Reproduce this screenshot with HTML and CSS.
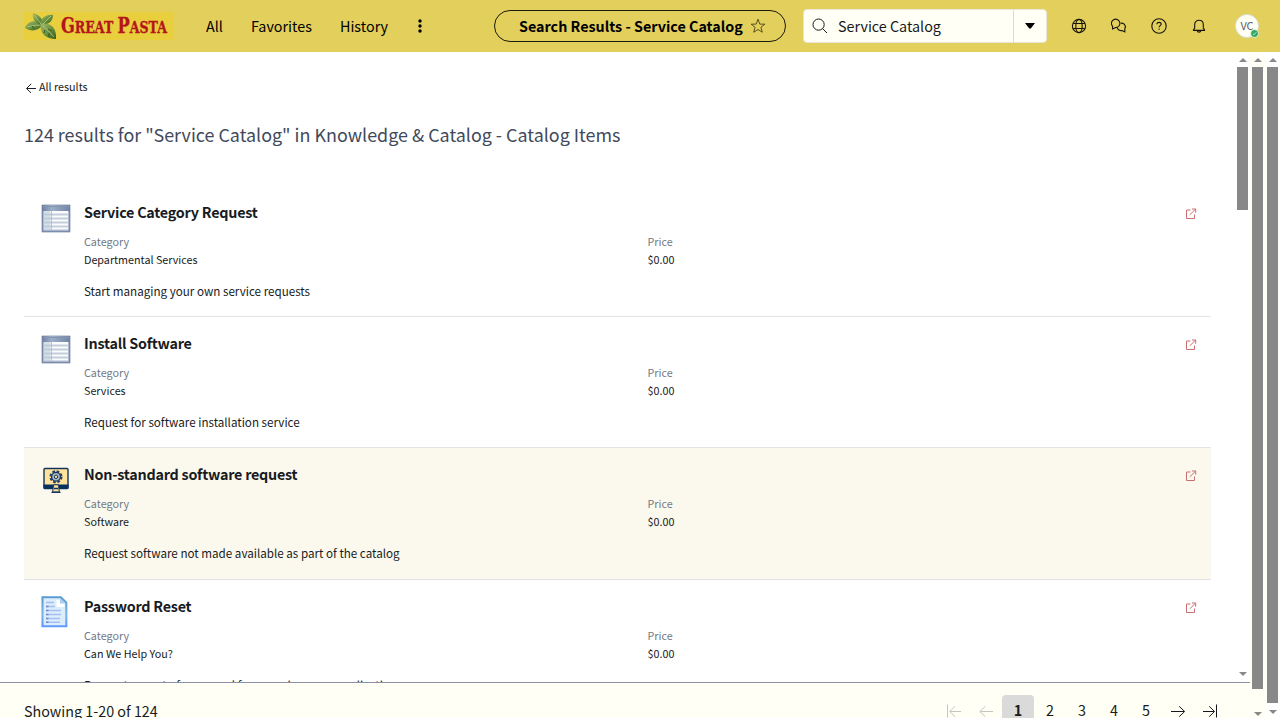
FILE: index.html
```html
<!DOCTYPE html>
<html lang="en">
<head>
<meta charset="utf-8">
<title>Search Results - Service Catalog</title>
<link rel="stylesheet" href="styles.css">
</head>
<body>
<svg class="defs" width="0" height="0">
  <defs>
    <linearGradient id="tableHead" x1="0" y1="0" x2="1" y2="0"><stop offset="0" stop-color="#6d7fa0"/><stop offset=".35" stop-color="#9dafc6"/><stop offset="1" stop-color="#7184a4"/></linearGradient>
    <linearGradient id="leaf" x1="0" y1="0" x2="1" y2="1"><stop offset="0" stop-color="#a3bc6c"/><stop offset=".55" stop-color="#668e3b"/><stop offset="1" stop-color="#34581d"/></linearGradient>
    <linearGradient id="page" x1="0" y1="0" x2="0" y2="1"><stop offset="0" stop-color="#5a9bd0"/><stop offset=".6" stop-color="#7db4e4"/><stop offset="1" stop-color="#5f98ff"/></linearGradient>
    <symbol id="table" viewBox="0 0 32 32">
      <rect x="1.5" y="2.5" width="29" height="28" rx="1" fill="#c9d1dd"/>
      <rect x="2.7" y="3.7" width="26.6" height="25.6" fill="#fafbfd" stroke="#7a89a9" stroke-width="1.8"/>
      <rect x="2" y="3" width="28" height="6" fill="url(#tableHead)"/>
      <path d="M3 4.5h26" stroke="#8794b1"/>
      <path d="M3.5 12.5h25M3.5 16.5h25M3.5 20.5h25M3.5 24.5h25" stroke="#c3cedd" stroke-width="1.8"/>
      <path d="M3.5 28.3h25" stroke="#a9b6cc" stroke-width="1.5"/>
      <path d="M4 9h6v19H4z" fill="#b7cad9" opacity=".55"/><path d="M11.3 9v19" stroke="#a7bccb"/>
    </symbol>
    <symbol id="external" viewBox="0 0 12 12"><path d="M5.5 2H1.5v8.5h8V6.5M4.8 6.8 10.5 1.2M7 1h3.7v3.7" fill="none" stroke="#c96f70" stroke-width="1"/></symbol>
  </defs>
</svg>
<div class="app">
  <header class="topbar">
    <svg class="logo" width="150" height="28" viewBox="0 0 150 28" role="img">
      <rect width="150" height="28" fill="#e9cf3d"/>
      <path d="M1 16C4 8 12 7 19 13 14 19 7 20 1 16z" fill="url(#leaf)"/>
      <path d="M9 1C16 3 20 8 18 14 11 11 8 7 9 1z" fill="url(#leaf)"/>
      <path d="M29 3C22 2 16 7 16 12 23 14 29 10 29 3z" fill="url(#leaf)"/>
      <path d="M17 12C26 10 33 16 32 27 22 27 15 21 17 12z" fill="url(#leaf)"/>
      <path d="M3 15q7-2 14-2M10 3l7 9M27 4l-8 8M19 14q5 4 11 11" fill="none" stroke="#bed18c" stroke-width=".7"/>
      <path d="M21 18l-1 3M25 21v4M24 17l4 2M8 14l2 3" stroke="#31541e" stroke-width=".9"/>
      <text class="wordmark" x="37" y="21.3" textLength="106" lengthAdjust="spacingAndGlyphs"><tspan class="cap">G</tspan>REAT <tspan class="cap">P</tspan>ASTA</text>
    </svg>
    <nav class="menu"><span class="m-all">All</span><span class="m-fav">Favorites</span><span class="m-his">History</span></nav>
    <svg class="kebab" width="4" height="14"><circle cx="2" cy="2" r="1.7"/><circle cx="2" cy="7" r="1.7"/><circle cx="2" cy="12" r="1.7"/></svg>
    <div class="pill"><span class="pill-text">Search Results - Service Catalog</span>
      <svg width="16" height="16" viewBox="0 0 16 16"><path d="M8 1.2l1.8 4.9 5 .1-3.9 3.1 1.4 4.9L8 11.5l-4.3 2.7 1.4-4.9-3.9-3.1 5-.1z" fill="none" stroke="#38340f" stroke-width=".8"/></svg>
    </div>
    <div class="search">
      <svg class="lens" width="16" height="16" viewBox="0 0 16 16"><circle cx="6.6" cy="6.6" r="5.6" /><path d="M10.6 10.6 15 15"/></svg>
      <span class="search-text">Service Catalog</span>
      <span class="drop"><svg width="10" height="6"><path d="M0 0h10L5.8 5.6H4.2z"/></svg></span>
    </div>
    <div class="tools">
      <svg width="16" height="16" viewBox="0 0 16 16"><circle cx="8" cy="8" r="6.6"/><ellipse cx="8" cy="8" rx="3.2" ry="6.6"/><path d="M2.2 5.5h11.6M2.2 10.5h11.6"/></svg>
      <svg width="16" height="16" viewBox="0 0 16 16"><path d="M1.6 11V8.3A4.2 4.2 0 1 1 4.6 9.6L1.6 11z"/><path d="M9.6 5.3a3.7 3.7 0 0 1 4.2 5.5V13.9L11 12.5A4 4 0 0 1 6.2 9.4"/></svg>
      <svg width="16" height="16" viewBox="0 0 16 16"><circle cx="8" cy="8" r="7.2"/><path d="M5.9 6.3C6 3.7 10.2 3.8 10.2 6.1 10.2 7.6 8.1 7.6 8.1 9.3M8.1 10.6v1.2"/></svg>
      <svg width="16" height="16" viewBox="0 0 16 16"><path d="M2.5 12.4V11.6L3.7 10V6.5C3.7 .8 12.3 .8 12.3 6.5V10l1.2 1.6v.8zM6.2 12.6c.3 2 3.3 2 3.6 0"/></svg>
    </div>
    <div class="avatar">VC<svg class="presence" width="9" height="9" viewBox="0 0 9 9"><circle cx="4.5" cy="4.5" r="4" fill="#35a566" stroke="#fffff4" stroke-width=".8"/><path d="M2.8 4.7 4 5.8l2.2-2.5" fill="none" stroke="#d8f5df" stroke-width=".8"/></svg></div>
  </header>

  <div class="body">
    <div class="pane">
      <div class="scroll">
        <main class="results">
          <a class="back"><svg width="12" height="12" viewBox="0 0 12 12"><path d="M11 7.5H1.8M6.2 2.8 1.5 7.5l4.5 4.4" fill="none" stroke="#1d2129"/></svg><span>All results</span></a>
          <h1><span>124 results for "Service Catalog" in Knowledge &amp; Catalog - Catalog Items</span></h1>
          <article class="row">
            <svg class="thumb" width="32" height="32"><use href="#table"/></svg>
            <div class="info"><h2><span>Service Category Request</span></h2>
              <dl><div><dt>Category</dt><dd>Departmental Services</dd></div><div><dt>Price</dt><dd>$0.00</dd></div></dl>
              <p><span>Start managing your own service requests</span></p></div>
            <svg class="ext" width="12" height="12"><use href="#external"/></svg>
          </article>
          <article class="row">
            <svg class="thumb" width="32" height="32"><use href="#table"/></svg>
            <div class="info"><h2><span>Install Software</span></h2>
              <dl><div><dt>Category</dt><dd>Services</dd></div><div><dt>Price</dt><dd>$0.00</dd></div></dl>
              <p><span>Request for software installation service</span></p></div>
            <svg class="ext" width="12" height="12"><use href="#external"/></svg>
          </article>
          <article class="row hover">
            <svg class="thumb" width="32" height="32" viewBox="0 0 32 32">
              <rect x="4" y="3.5" width="24" height="20" rx="1" fill="#ffe29b" stroke="#12345d" stroke-width="1.4"/>
              <path d="M3.5 19.5h25v4h-25z" fill="#06305f"/><path d="M13.5 19.8h5l.8 7.2h-6.6z" fill="#ffe29b" stroke="#12345d"/><path d="M11.5 27.3h9M14 23.5h4" stroke="#12345d" stroke-width="1.3"/>
              <circle cx="16" cy="11.8" r="5.6" fill="none" stroke="#243f63" stroke-width="1.9" stroke-dasharray="2.7 1.7"/><circle cx="16" cy="11.8" r="4.4" fill="#a9b7c5" stroke="#12345d" stroke-width="1.3"/><circle cx="16" cy="11.8" r="1.7" fill="#ffe29b" stroke="#12345d"/>
            </svg>
            <div class="info"><h2><span>Non-standard software request</span></h2>
              <dl><div><dt>Category</dt><dd>Software</dd></div><div><dt>Price</dt><dd>$0.00</dd></div></dl>
              <p><span>Request software not made available as part of the catalog</span></p></div>
            <svg class="ext" width="12" height="12"><use href="#external"/></svg>
          </article>
          <article class="row">
            <svg class="thumb" width="32" height="32" viewBox="0 0 32 32">
              <path d="M2.5 1.2h18.3l5.5 5.5v23.6H2.5z" fill="#dbeefd" stroke="url(#page)" stroke-width="2.1"/>
              <path d="M16.5 4h3.5l4.5 4.5v2.5h-8z" fill="#fff"/><path d="M20 2v5.5h6z" fill="#a8cef0"/>
              <path d="M6 6.5h8M6 10.5h9M6 14.5h15M6 18.5h15M6 22.5h14M6 26.3h14" stroke="#a9bdf0" stroke-width="1.6"/><path d="M6 10.5h2.5M6 14.5h2.5M6 18.5h2.5M6 22.5h2.5M6 26.3h2.5" stroke="#6d86cf" stroke-width="1.6"/>
            </svg>
            <div class="info"><h2><span>Password Reset</span></h2>
              <dl><div><dt>Category</dt><dd>Can We Help You?</dd></div><div><dt>Price</dt><dd>$0.00</dd></div></dl>
              <p><span>Request a reset of password for a service or an application</span></p></div>
            <svg class="ext" width="12" height="12"><use href="#external"/></svg>
          </article>
        </main>
        <div class="bar bar-inner"><i class="up"></i><b></b><i class="down"></i></div>
      </div>
      <footer class="pager">
        <span class="showing">Showing 1-20 of 124</span>
        <div class="pages">
          <span class="off"><svg width="16" height="16" viewBox="0 0 16 16"><path d="M1.5 1.5v13M15 8.5H4M9 3.3 3.7 8.5 9 13.7"/></svg></span>
          <span class="off"><svg width="16" height="16" viewBox="0 0 16 16"><path d="M15 8.5H2M7.3 3.3 1.8 8.5l5.5 5.2"/></svg></span>
          <span class="current">1</span><span>2</span><span>3</span><span>4</span><span>5</span>
          <span><svg width="16" height="16" viewBox="0 0 16 16"><path d="M1 8.5h13M9.2 3.3 14.7 8.5l-5.5 5.2"/></svg></span>
          <span><svg width="16" height="16" viewBox="0 0 16 16"><path d="M14.5 1.5v13M1 8.5h11M7.2 3.3 12.5 8.5 7.2 13.7"/></svg></span>
        </div>
      </footer>
    </div>
    <div class="bar bar-mid"><i class="up"></i><b></b><i class="down"></i></div>
    <div class="bar bar-outer"><i class="up"></i><b></b><i class="down"></i></div>
  </div>
</div>
</body>
</html>
```
FILE: styles.css
```css
* { box-sizing: border-box; }
body { margin: 0; background: #fff; color: #181b22; font-family: "Noto Sans CJK SC", "Noto Sans", sans-serif; overflow: hidden; }
.defs { position: absolute; }
h1, h2, p, dl, dt, dd { margin: 0; font-weight: 400; }
svg { display: block; flex: none; }
.app { width: 1280px; height: 718px; display: flex; flex-direction: column; overflow: hidden; white-space: nowrap; }

.topbar { flex: none; height: 52px; background: #e2cf5c; display: flex; align-items: center; padding-left: 24px; color: #000; font-size: 14.33px; line-height: 24px; }
.wordmark { fill: #b3151b; stroke: #b3151b; stroke-width: .35; font-family: "DejaVu Serif"; font-weight: 700; font-size: 17px; }
.wordmark .cap { font-size: 22px; }
.menu { display: flex; margin-left: 32px; }
.m-all { width: 45px; }
.m-fav { width: 89px; }
.m-his { width: 78px; }
.kebab { width: 4px; }
.pill { margin-left: 72px; width: 292px; height: 32px; border: 1px solid #1c1a0b; border-radius: 16px; display: flex; align-items: center; padding-left: 24px; font-weight: 700; }
.pill-text { width: 231px; }
.search { margin-left: 17px; width: 244px; height: 34px; background: #fffff5; border: 1px solid #e7e5d6; border-radius: 4px; display: flex; align-items: center; padding-left: 8px; color: #16181d; }
.lens { fill: none; stroke: #16181d; stroke-width: 1; }
.search-text { margin-left: 10px; flex: 1; }
.drop { width: 33px; height: 32px; border-left: 1px solid #dedccf; display: flex; align-items: center; justify-content: center; }
.tools { display: flex; gap: 24px; margin-left: 24px; }
.tools svg { fill: none; stroke: #15130a; stroke-width: 1.1; }
.avatar { position: relative; margin-left: 28px; width: 24px; height: 24px; border-radius: 50%; background: #fffff4; border: 1px solid #dcdcd8; color: #5a6273; font-size: 11px; line-height: 20px; text-align: center; }
.presence { position: absolute; left: 14px; top: 14px; }

.body { flex: 1; display: flex; min-height: 0; }
.pane { width: 1250px; display: flex; flex-direction: column; min-height: 0; }
.scroll { flex: none; height: 630px; display: flex; overflow: hidden; }
.results { width: 1235px; padding: 24px 24px 0; }
.back { display: flex; align-items: center; height: 21px; font-size: 10.75px; line-height: 20px; gap: 2px; padding-left: 1px; }
h1 { margin-top: 23px; height: 28px; line-height: 28px; font-size: 17.91px; color: #42495b; }
.row { width: 1187px; height: 131.33px; border-bottom: 1px solid #e2e3e6; display: flex; padding: 15px 14px 0 16px; overflow: hidden; }
h1 + .row { margin-top: 37.6px; }
.hover { background: #fbf9ee; }
.thumb { margin-top: 1.5px; }
.info { margin-left: 12px; width: 1101px; }
h2 { height: 24px; line-height: 22px; font-size: 14.33px; font-weight: 700; letter-spacing: -.23px; }
dl { margin-top: 8px; display: flex; font-size: 10.75px; line-height: 18px; }
dl > div { flex: none; width: 563.5px; }
dt { color: #737986; }
p { margin-top: 13px; font-size: 11.64px; line-height: 18px; }
.ext { margin-top: 7px; }

.pager { flex: none; height: 36px; background: #fffff5; border-top: 1px solid #8c90a3; display: flex; justify-content: space-between; padding: 12px 24px 0; font-size: 14.33px; line-height: 32px; overflow: hidden; }
.pages { display: flex; line-height: 30px; }
.pages span { width: 32px; height: 32px; display: flex; justify-content: center; }
.pages svg { margin-top: 8px; fill: none; stroke: #16181d; stroke-width: 1; }
.pages .off svg { stroke: #c5c5bf; }
.pages .current { background: #dadada; border-radius: 4px; font-weight: 700; }

.bar { width: 15px; display: flex; flex-direction: column; align-items: center; flex: none; }
.bar i { flex: none; height: 0; width: 0; border-left: 4px solid transparent; border-right: 4px solid transparent; }
.bar .up { border-bottom: 4px solid #888; margin: 6px 0 5px; }
.bar .down { border-top: 4px solid #888; }
.bar b { width: 11px; background: #888; }
.bar-mid { background: #fffff5; }
.bar-inner b { height: 143px; margin-bottom: 462px; }
.bar-mid b { height: 622px; margin-bottom: 23px; }
.bar-outer b { height: 636px; margin-bottom: 7px; }
```
